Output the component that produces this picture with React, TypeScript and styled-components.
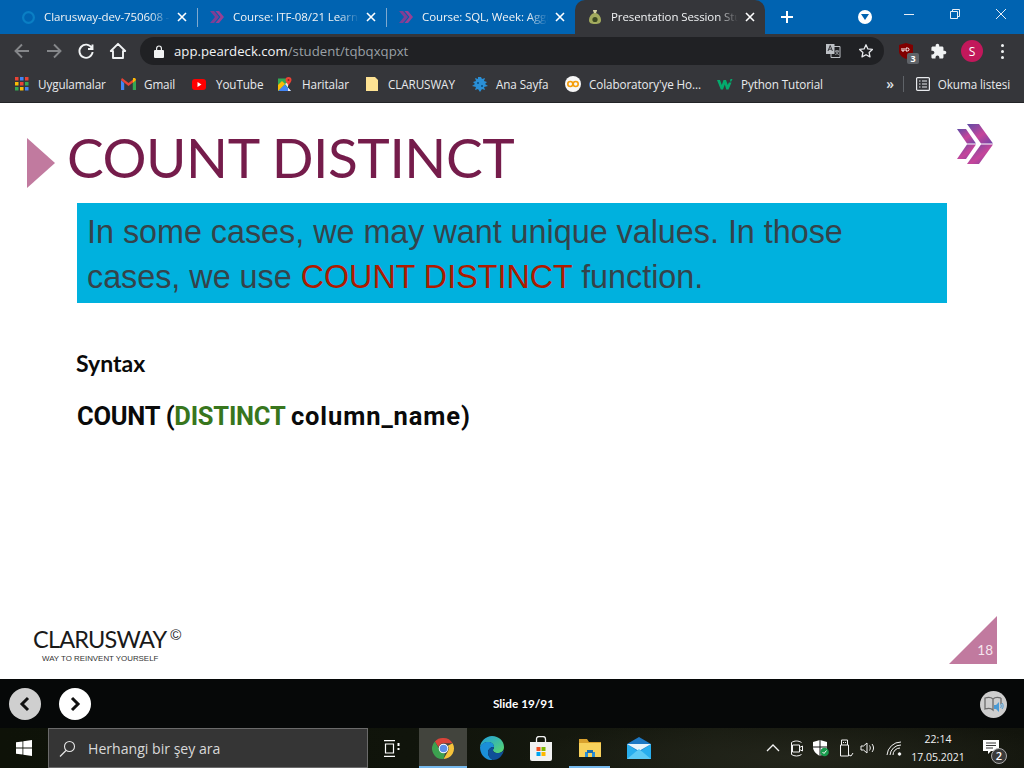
import React from "react";
import styled, { createGlobalStyle } from "styled-components";

const Global = createGlobalStyle`
  html, body { margin: 0; padding: 0; width: 1024px; height: 768px; overflow: hidden; background: #fff; }
  * { box-sizing: border-box; }
`;

const Page = styled.div`
  width: 1024px; height: 768px; display: flex; flex-direction: column;
  font-family: "Open Sans", "Liberation Sans", sans-serif; overflow: hidden;
`;

/* ---------- tab strip ---------- */
const TabStrip = styled.div`
  height: 34px; flex: none; background: #0063b1; display: flex; align-items: stretch; padding-left: 8px;
`;
const Tab = styled.div<{ $active?: boolean; $sep?: boolean }>`
  width: ${p => (p.$active ? 190 : 189)}px; flex: none; display: flex; align-items: center; padding: 0 10px 0 12px; position: relative;
  background: ${p => (p.$active ? "#35363a" : "transparent")};
  border-radius: ${p => (p.$active ? "10px 10px 0 0" : "0")};
  ${p => p.$sep ? `&::after { content: ""; position: absolute; right: -1px; top: 8px; height: 19px; width: 1px; background: #7fa9cf; }` : ""}
`;
const TabIcon = styled.span`
  width: 16px; height: 16px; flex: none; margin-right: 8px; display: flex; align-items: center; justify-content: center;
`;
const TabTitle = styled.span`
  flex: 1; min-width: 0; margin-top: -2px; overflow: hidden; white-space: nowrap; color: #f1f3f4; font-size: 11.5px; letter-spacing: -.1px;
  -webkit-mask-image: linear-gradient(to right, #000 84%, transparent 100%);
  mask-image: linear-gradient(to right, #000 84%, transparent 100%);
`;
const TabClose = styled.svg`
  width: 10px; height: 10px; flex: none; margin-left: 7px; stroke: #fff; stroke-width: 1.6; fill: none;
`;
const NewTab = styled.svg`
  width: 14px; height: 14px; margin: 10px 0 0 15px; flex: none; stroke: #fff; stroke-width: 2; fill: none;
`;
const TabSpacer = styled.div`flex: 1;`;
const ProfileDrop = styled.div`
  width: 14px; height: 14px; border-radius: 50%; background: #fff; margin: 10px 14px 0 0; display: flex; align-items: center; justify-content: center; flex: none;
`;
const WindowBtn = styled.svg`
  width: 46px; height: 28px; flex: none; stroke: #e8eef5; stroke-width: 1; fill: none;
`;

/* ---------- toolbar ---------- */
const Toolbar = styled.div`
  height: 34px; flex: none; background: #35363a; display: flex; align-items: center; padding-left: 12px;
`;
const ToolIcon = styled.svg<{ $dim?: boolean; $last?: boolean }>`
  width: 20px; height: 20px; flex: none; margin-right: ${p => (p.$last ? 7 : 12)}px; fill: none;
  stroke: ${p => (p.$dim ? "#85878a" : "#f1f3f4")}; stroke-width: 1.9;
`;
const Omnibox = styled.div`
  width: 744px; height: 28px; margin-left: 5px; border-radius: 14px; background: #202124; display: flex; align-items: center; padding-left: 14px; flex: none;
`;
const Url = styled.span`
  margin-left: 10px; font-size: 13.2px; color: #f1f3f4; white-space: nowrap;
  span { color: #9aa0a6; }
`;
const OmniRight = styled.div`
  margin-left: auto; display: flex; align-items: center; gap: 17px; padding-right: 10px;
`;
const ExtGroup = styled.div`
  display: flex; align-items: center; margin-left: 15px; flex: none;
`;
const UbadgeWrap = styled.div`
  width: 16px; height: 18px; position: relative; margin-right: 15px;
`;
const UCount = styled.span`
  position: absolute; left: 8px; top: 11px; width: 12px; height: 11px; background: #5f6368; border-radius: 2px; color: #fff; font-size: 9px; font-weight: 700; line-height: 11px; text-align: center;
`;
const Avatar = styled.div`
  width: 22px; height: 22px; border-radius: 50%; background: #c2185b; color: #fff; font-size: 12px; display: flex; align-items: center; justify-content: center; margin: 0 18px 0 14px;
`;
const Dots = styled.div`
  display: flex; flex-direction: column; gap: 3px;
  i { width: 3px; height: 3px; border-radius: 50%; background: #f1f3f4; display: block; }
`;

/* ---------- bookmarks ---------- */
const Bookmarks = styled.div`
  height: 35px; flex: none; background: #35363a; border-bottom: 1px solid #232427; display: flex; align-items: center; padding: 0 0 2px 15px; position: relative;
`;
const Mark = styled.div<{ $w: number; $gap?: number }>`
  width: ${p => p.$w}px; flex: none; display: flex; align-items: center; gap: ${p => p.$gap ?? 9}px;
  font-size: 11.7px; color: #e8eaed; white-space: nowrap; letter-spacing: -.1px;
  svg { flex: none; }
`;
const BookEnd = styled.div`
  margin-left: auto; display: flex; align-items: center; padding-right: 14px; color: #e8eaed; font-size: 11.7px; white-space: nowrap; letter-spacing: -.1px;
`;
const Chev = styled.span`
  font-size: 14px; margin-right: 9px; color: #dfe1e5; line-height: 1; font-weight: 600;
`;
const Divider = styled.span`
  width: 1px; height: 16px; background: #5f6368; margin-right: 12px;
`;
const ReadingIcon = styled.svg`
  margin-right: 8px; flex: none;
`;

/* ---------- slide ---------- */
const Slide = styled.main`
  flex: 1; background: #fff; display: flex; flex-direction: column; position: relative; padding: 32px 31px 15px 27px; min-height: 0;
`;
const TitleRow = styled.div`
  display: flex; align-items: center; height: 55px; flex: none;
`;
const Tri = styled.div`
  width: 0; height: 0; border-left: 28px solid #c17a9f; border-top: 25px solid transparent; border-bottom: 25px solid transparent; flex: none;
`;
const Title = styled.h1`
  margin: 0 0 11px 12px; font-family: "Lato", "Open Sans", sans-serif; font-weight: 400; font-size: 55px; line-height: 55px; color: #751c4b; white-space: nowrap; letter-spacing: -.45px;
`;
const Logo = styled.svg`
  position: absolute; right: 31px; top: 21px; width: 36px; height: 40px;
`;
const Callout = styled.div`
  margin: 13px 46px 0 50px; width: 870px; height: 100px; background: #00b1de; padding: 7px 10px; color: #35434a; font-family: "Liberation Sans", Arial, sans-serif; font-size: 32.3px; line-height: 44.5px; flex: none;
  b { font-weight: 400; color: #ae1b00; }
`;
const Syntax = styled.div`
  margin: 47px 0 0 49px; font-family: "Lato", sans-serif; font-weight: 700; font-size: 23px; line-height: 26px; color: #0a0a0a; flex: none;
`;
const Code = styled.div`
  margin: 24px 0 0 50px; font-family: "Roboto", sans-serif; font-weight: 700; font-size: 25.5px; line-height: 32px; color: #0a0a0a; white-space: nowrap; flex: none; letter-spacing: -.25px;
  b { font-weight: 700; color: #38761d; letter-spacing: -.25px; }
  span { letter-spacing: .9px; }
`;
const SlideFoot = styled.div`
  margin-top: auto; display: flex; align-items: flex-end; justify-content: space-between; flex: none; padding-left: 6px;
`;
const Brand = styled.div`
  display: flex; flex-direction: column; font-family: "Lato", "Liberation Sans", sans-serif; color: #1a1a1a;
`;
const BrandName = styled.div`
  font-size: 23.5px; line-height: 24px; letter-spacing: -.8px; white-space: nowrap;
  sup { font-family: "Liberation Sans", sans-serif; font-size: 15px; line-height: 0; vertical-align: 8px; margin-left: 4px; letter-spacing: 0; }
`;
const BrandTag = styled.div`
  font-family: "Liberation Sans", sans-serif; font-size: 7.9px; line-height: 10px; margin: 3px 0 0 9px; color: #333; white-space: nowrap;
`;
const Corner = styled.div`
  width: 48px; height: 48px; position: relative; margin-right: -4px;
  clip-path: polygon(100% 0, 100% 100%, 0 100%);
  background: #c17a9f; color: #f5e6ee; font-family: "Lato", sans-serif; font-size: 13.5px;
  display: flex; align-items: flex-end; justify-content: flex-end; padding: 0 4px 6px 0;
`;

/* ---------- deck nav ---------- */
const DeckBar = styled.div`
  height: 49px; flex: none; background: #060808; display: flex; align-items: center; padding: 0 17px 0 9px; position: relative;
`;
const RoundBtn = styled.button<{ $off?: boolean }>`
  width: 32px; height: 32px; border-radius: 50%; border: 0; padding: 0; background: ${p => (p.$off ? "#cfcfcf" : "#fff")}; margin-right: 18px; display: flex; align-items: center; justify-content: center; flex: none;
`;
const SlideNo = styled.div`
  position: absolute; left: 0; right: 0; top: 0; bottom: 0; display: flex; align-items: center; justify-content: center; padding-left: 23px;
  color: #fff; font-family: "Lato", sans-serif; font-weight: 700; font-size: 11.8px; pointer-events: none;
`;
const ReadBtn = styled.div`
  margin-left: auto; width: 27px; height: 27px; border-radius: 50%; background: #cdcdcd; display: flex; align-items: center; justify-content: center; z-index: 1; margin-top: 1px;
`;

/* ---------- taskbar ---------- */
const Taskbar = styled.div`
  height: 40px; flex: none; display: flex; align-items: stretch; color: #fff;
  background: radial-gradient(ellipse 280px 40px at 800px 30px, #23251b 0%, transparent 100%), linear-gradient(90deg, #0e1208, #10140b 40%, #181b11 70%, #12140c);
`;
const StartBtn = styled.div`
  width: 48px; flex: none; display: flex; align-items: center; justify-content: center;
`;
const SearchBox = styled.div`
  width: 320px; flex: none; background: #353535; border: 1px solid #6a6a6a; display: flex; align-items: center; padding-left: 10px; font-family: "Open Sans", sans-serif; font-size: 14.1px; color: #d9d9d9; gap: 12px;
`;
const TaskBtn = styled.div<{ $w?: number; $active?: boolean; $inset?: number; $pr?: number }>`
  width: ${p => p.$w ?? 49}px; flex: none; display: flex; align-items: center; justify-content: center; position: relative; padding-right: ${p => p.$pr ?? 0}px;
  background: ${p => (p.$active ? "#42443d" : "transparent")};
  ${p => (p.$inset !== undefined) ? `&::after { content: ""; position: absolute; left: ${p.$inset}px; right: ${p.$inset}px; bottom: 0; height: 2px; background: #76b9ed; }` : ""}
`;
const Tray = styled.div`
  margin-left: auto; display: flex; align-items: center; flex: none; padding-right: 13px;
`;
const TrayIcon = styled.svg<{ $mr: number }>`
  width: 18px; height: 18px; flex: none; margin-right: ${p => p.$mr}px; stroke: #f4f4f4; fill: none; stroke-width: 1;
`;
const ShieldIcon = styled.svg`
  width: 16px; height: 18px; flex: none; margin-right: 7px;
`;
const Clock = styled.div`
  width: 62px; text-align: center; font-size: 10.5px; line-height: 18px; color: #f2f2f2; font-family: "Open Sans", sans-serif; white-space: nowrap;
`;
const Notice = styled.div`
  width: 40px; align-self: stretch; position: relative; display: flex; align-items: center; justify-content: center; padding-bottom: 3px; margin-left: 2px;
`;
const NoticeCount = styled.span`
  position: absolute; left: 20px; top: 20px; width: 16px; height: 16px; border-radius: 50%; background: #3a3a3a; border: 1px solid #aaa; color: #fff; font-size: 11px; font-weight: 600; line-height: 14px; text-align: center;
`;

const X = () => (
  <TabClose viewBox="0 0 10 10"><path d="M1 1l8 8M9 1l-8 8" /></TabClose>
);
const Chevrons = ({ size = 16 }: { size?: number }) => (
  <svg width={size} height={size} viewBox="0 0 16 16">
    <path d="M1 2h4l5 6-5 6H1l5-6z" fill="#7c3f96" />
    <path d="M6.500 2h3.500l5 6-5 6H6.500l5-6z" fill="#984094" />
  </svg>
);

export default function App() {
  return (
    <Page>
      <Global />
      <TabStrip>
        <Tab $sep>
          <TabIcon>
            <svg width="15" height="15" viewBox="0 0 15 15"><circle cx="7.5" cy="7.5" r="5.4" fill="none" stroke="#0a7fc4" strokeWidth="2.2" /></svg>
          </TabIcon>
          <TabTitle>Clarusway-dev-750608 - Overview</TabTitle>
          <X />
        </Tab>
        <Tab $sep>
          <TabIcon><Chevrons /></TabIcon>
          <TabTitle>Course: ITF-08/21 Learning Path</TabTitle>
          <X />
        </Tab>
        <Tab>
          <TabIcon><Chevrons /></TabIcon>
          <TabTitle>Course: SQL, Week: Aggregate</TabTitle>
          <X />
        </Tab>
        <Tab $active>
          <TabIcon>
            <svg width="14" height="16" viewBox="0 0 14 16">
              <path d="M5 1h4L8 4c3 1 5 4 5 7 0 3-2 4-6 4s-6-1-6-4c0-3 2-6 5-7z" fill="#a3ab5e" />
              <circle cx="7" cy="10.5" r="2.6" fill="#3d4a22" />
              <path d="M5 1h4l-1 3H6z" fill="#d6d2a8" />
            </svg>
          </TabIcon>
          <TabTitle>Presentation Session Student</TabTitle>
          <X />
        </Tab>
        <NewTab viewBox="0 0 14 14"><path d="M7 1v12M1 7h12" /></NewTab>
        <TabSpacer />
        <ProfileDrop>
          <svg width="8" height="6" viewBox="0 0 8 6"><path d="M0 0h8L4 6z" fill="#0063b1" /></svg>
        </ProfileDrop>
        <WindowBtn viewBox="0 0 46 28"><path d="M18 14.5h10" /></WindowBtn>
        <WindowBtn viewBox="0 0 46 28"><path d="M18.5 11.5h7v7h-7zM20.5 11.5v-2h7v7h-2" /></WindowBtn>
        <WindowBtn viewBox="0 0 46 28"><path d="M18 9l10 10M28 9L18 19" /></WindowBtn>
      </TabStrip>

      <Toolbar>
        <ToolIcon $dim viewBox="0 0 20 20"><path d="M17 10H4M10 3.5L3.5 10l6.5 6.5" /></ToolIcon>
        <ToolIcon $dim viewBox="0 0 20 20"><path d="M3 10h13M10 3.5l6.5 6.500-6.500 6.500" /></ToolIcon>
        <ToolIcon viewBox="0 0 20 20"><path d="M15.800 7A6.600 6.600 0 1 0 16.600 11M16.500 3.500V8h-4.500" /></ToolIcon>
        <ToolIcon $last viewBox="0 0 20 20"><path d="M10 2.800L2.800 10H5v7h10v-7h2.200z" strokeLinejoin="round" /></ToolIcon>
        <Omnibox>
          <svg width="10" height="13" viewBox="0 0 10 13"><path d="M1 5h8a1 1 0 0 1 1 1v6a1 1 0 0 1-1 1H1a1 1 0 0 1-1-1V6a1 1 0 0 1 1-1z" fill="#f1f3f4" /><path d="M2.600 5V3.400a2.400 2.400 0 0 1 4.800 0V5" fill="none" stroke="#f1f3f4" strokeWidth="1.200" /></svg>
          <Url>app.peardeck.com<span>/student/tqbqxqpxt</span></Url>
          <OmniRight>
            <svg width="15" height="14" viewBox="0 0 15 14">
              <path d="M5 2.500h9v11H5z" fill="none" stroke="#bdc1c6" strokeWidth="1" />
              <path d="M0 0h8.500v10H0z" fill="#bdc1c6" />
              <path d="M2 7l2.200-5.500L6.400 7M3 5.200h2.600" fill="none" stroke="#35363a" strokeWidth="1" />
              <path d="M9 7h4M11 6v1M9.800 7c.3 2 1.500 3 3 3.500M12.300 7c-.3 2-1.500 3-3 3.500" fill="none" stroke="#bdc1c6" strokeWidth=".8" />
            </svg>
            <svg width="16" height="16" viewBox="0 0 16 16"><path d="M8 1.800l1.900 4.100 4.500.5-3.300 3 .9 4.500L8 11.700l-4 2.200.9-4.500-3.300-3 4.500-.5z" fill="none" stroke="#e8eaed" strokeWidth="1.300" strokeLinejoin="round" /></svg>
          </OmniRight>
        </Omnibox>
        <ExtGroup>
          <UbadgeWrap>
            <svg width="14" height="16" viewBox="0 0 14 16"><path d="M0 2l7-2 7 2v6c0 4-3 6-7 8-4-2-7-4-7-8z" fill="#800000" /><path d="M3 5v3h2V5M7 5v3h1.500a1.500 1.500 0 0 0 0-3z" fill="none" stroke="#fff" strokeWidth="1" /></svg>
            <UCount>3</UCount>
          </UbadgeWrap>
          <svg width="17" height="17" viewBox="0 0 24 24"><path d="M20.500 11H19V7c0-1.100-.9-2-2-2h-4V3.500C13 2.120 11.880 1 10.500 1S8 2.120 8 3.500V5H4c-1.100 0-1.990.9-1.990 2v3.800H3.500c1.490 0 2.700 1.210 2.700 2.700s-1.210 2.700-2.700 2.700H2V20c0 1.100.9 2 2 2h3.800v-1.500c0-1.490 1.210-2.700 2.700-2.700 1.490 0 2.700 1.210 2.700 2.700V22H17c1.100 0 2-.9 2-2v-4h1.500c1.380 0 2.500-1.120 2.500-2.500S21.880 11 20.500 11z" fill="#f1f3f4" /></svg>
          <Avatar>S</Avatar>
          <Dots><i /><i /><i /></Dots>
        </ExtGroup>
      </Toolbar>

      <Bookmarks>
        <Mark $w={106}>
          <svg width="14" height="14" viewBox="0 0 14 14">
            <path d="M0 0h3.500v3.500H0z" fill="#ea4335" /><path d="M5 0h3.500v3.500H5z" fill="#4285f4" /><path d="M10 0h3.500v3.500H10z" fill="#ea4335" />
            <path d="M0 5h3.500v3.500H0z" fill="#fbbc05" /><path d="M5 5h3.500v3.500H5z" fill="#ea4335" /><path d="M10 5h3.500v3.500H10z" fill="#34a853" />
            <path d="M0 10h3.500v3.500H0z" fill="#34a853" /><path d="M5 10h3.500v3.500H5z" fill="#fbbc05" /><path d="M10 10h3.500v3.500H10z" fill="#4285f4" />
          </svg>
          Uygulamalar
        </Mark>
        <Mark $w={71} $gap={8}>
          <svg width="15" height="12" viewBox="0 0 15 12">
            <path d="M0 2v10h3.200V5z" fill="#4285f4" /><path d="M15 2v10h-3.200V5z" fill="#34a853" />
            <path d="M0 2l7.500 6L15 2l-1-2-6.500 5L1 0z" fill="#ea4335" /><path d="M12 0h2l1 2-3.200 3z" fill="#fbbc05" />
          </svg>
          Gmail
        </Mark>
        <Mark $w={86} $gap={10}>
          <svg width="14" height="11" viewBox="0 0 14 11"><rect width="14" height="11" rx="3" fill="#f00" /><path d="M5.500 3l4 2.500-4 2.500z" fill="#fff" /></svg>
          YouTube
        </Mark>
        <Mark $w={88} $gap={10}>
          <svg width="14" height="14" viewBox="0 0 14 14">
            <path d="M0 1.500h10v12.500H0z" fill="#34a853" /><path d="M0 14l6.500-6.500L13 14z" fill="#4285f4" /><path d="M0 8l4-4 3 3-7 7z" fill="#fbbc05" />
            <path d="M7 7l3-2v9H13z" fill="#e8eaed" /><path d="M10.500 0a3 3 0 0 1 3 3c0 2-2 3-3 6-1-3-3-4-3-6a3 3 0 0 1 3-3z" fill="#ea4335" /><circle cx="10.500" cy="3" r="1" fill="#8f2a20" />
          </svg>
          Haritalar
        </Mark>
        <Mark $w={106} $gap={10}>
          <svg width="12" height="14" viewBox="0 0 12 14"><path d="M0 0h9l3 3v11H0z" fill="#fde293" /></svg>
          CLARUSWAY
        </Mark>
        <Mark $w={93} $gap={8}>
          <svg width="16" height="15" viewBox="0 0 16 15" fill="#2a8fd6">
            <path d="M6 0h3l1 2 3-1-1 3 3 1-2 2 3 2-4 1 1 3-3-1-2 3-2-3-3 1 1-3-4-1 3-2-2-2 3-1-1-3 3 1z" />
            <path d="M5 5h2v2H5zM9 8h2v2H9z" fill="#0e5c96" />
          </svg>
          Ana Sayfa
        </Mark>
        <Mark $w={152} $gap={8}>
          <svg width="16" height="16" viewBox="0 0 16 16">
            <circle cx="8" cy="8" r="8" fill="#f7f7f7" />
            <circle cx="5.300" cy="8" r="2.500" fill="none" stroke="#f59e0b" strokeWidth="1.600" />
            <circle cx="10.700" cy="8" r="2.500" fill="none" stroke="#f59e0b" strokeWidth="1.600" />
          </svg>
          Colaboratory'ye Ho...
        </Mark>
        <Mark $w={140} $gap={8}>
          <svg width="16" height="11" viewBox="0 0 16 11"><path d="M0 1h3l1.800 5L6.500 1h2.500l1.800 5 1-2.500h2.700L11.500 10.500H9.300L7.800 5.500 6 10.500H3.800z" fill="#04aa6d" /><path d="M13.500 0h2L14.300 2.500h-1.400z" fill="#04aa6d" /></svg>
          Python Tutorial
        </Mark>
        <BookEnd>
          <Chev>»</Chev>
          <Divider />
          <ReadingIcon width="14" height="14" viewBox="0 0 14 14">
            <rect x=".6" y=".6" width="12.800" height="12.800" rx="1" fill="none" stroke="#e8eaed" strokeWidth="1.200" />
            <path d="M3 4h1.500M3 7h1.500M3 10h1.500M6 4h5M6 7h5M6 10h5" stroke="#e8eaed" strokeWidth="1.200" />
          </ReadingIcon>
          Okuma listesi
        </BookEnd>
      </Bookmarks>

      <Slide>
        <TitleRow>
          <Tri />
          <Title>COUNT DISTINCT</Title>
        </TitleRow>
        <Logo viewBox="0 0 36 40">
          <defs>
            <linearGradient id="lg" x1="0" y1="0" x2="1" y2="1">
              <stop offset="0" stopColor="#5f4ba6" />
              <stop offset=".55" stopColor="#c6459a" />
              <stop offset="1" stopColor="#6f45a8" />
            </linearGradient>
          </defs>
          <path d="M0 5h9l10 14.500H10z" fill="url(#lg)" />
          <path d="M10 20.500h9L9 35H0z" fill="url(#lg)" />
          <path d="M10 0h12l14 19.500H24z" fill="url(#lg)" />
          <path d="M24 20.500h12L22 40H10z" fill="url(#lg)" />
        </Logo>
        <Callout>
          In some cases, we may want unique values. In those cases, we use <b>COUNT DISTINCT</b> function.
        </Callout>
        <Syntax>Syntax</Syntax>
        <Code>COUNT (<b>DISTINCT</b> <span>column_name)</span></Code>
        <SlideFoot>
          <Brand>
            <BrandName>CLARUSWAY<sup>©</sup></BrandName>
            <BrandTag>WAY TO REINVENT YOURSELF</BrandTag>
          </Brand>
          <Corner>18</Corner>
        </SlideFoot>
      </Slide>

      <DeckBar>
        <RoundBtn $off aria-label="Previous">
          <svg width="12" height="16" viewBox="0 0 12 16"><path d="M9 2L3 8l6 6" fill="none" stroke="#111" strokeWidth="3" /></svg>
        </RoundBtn>
        <RoundBtn aria-label="Next">
          <svg width="12" height="16" viewBox="0 0 12 16"><path d="M3 2l6 6-6 6" fill="none" stroke="#111" strokeWidth="3" /></svg>
        </RoundBtn>
        <SlideNo>Slide 19/91</SlideNo>
        <ReadBtn>
          <svg width="20" height="18" viewBox="0 0 20 18">
            <path d="M1 3c3-1 6-1 8 1v11c-2-2-5-2-8-1zM17 3c-3-1-6-1-8 1" fill="none" stroke="#6b6b6b" strokeWidth="1.300" />
            <path d="M17 3v6" stroke="#6b6b6b" strokeWidth="1.300" />
            <path d="M10 10h2l3-3v10l-3-3h-2z" fill="#4a9ad4" />
            <path d="M16.500 9c1 1 1 3 0 4M18 8c1.500 1.500 1.500 4.500 0 6" fill="none" stroke="#4a9ad4" strokeWidth="1" />
          </svg>
        </ReadBtn>
      </DeckBar>

      <Taskbar>
        <StartBtn>
          <svg width="16" height="16" viewBox="0 0 16 16"><path d="M0 2.300l6.500-.9v6.200H0zM7.300 1.300L16 0v7.600H7.300zM0 8.400h6.500v6.200L0 13.700zM7.300 8.400H16V16l-8.700-1.300z" fill="#fff" /></svg>
        </StartBtn>
        <SearchBox>
          <svg width="17" height="17" viewBox="0 0 17 17"><circle cx="10.500" cy="6.500" r="5" fill="none" stroke="#e6e6e6" strokeWidth="1.100" /><path d="M7 10.500L1 16.500" stroke="#e6e6e6" strokeWidth="1.300" /></svg>
          Herhangi bir şey ara
        </SearchBox>
        <TaskBtn $w={51} $pr={3}>
          <svg width="18" height="17" viewBox="0 0 18 17" fill="none" stroke="#fff" strokeWidth="1.200">
            <path d="M1 .6h11M1 16.400h11M2.500 4h8v9h-8z" /><path d="M15.500 3v3M15.500 8v2" strokeWidth="2" />
          </svg>
        </TaskBtn>
        <TaskBtn $w={48} $active $inset={0}>
          <svg width="23" height="23" viewBox="0 0 24 24">
            <path d="M12 1a11 11 0 0 1 9.500 5.500H12a5.500 5.500 0 0 0-5.300 4L3 4.600A11 11 0 0 1 12 1z" fill="#d9443a" />
            <path d="M21.500 6.500A11 11 0 0 1 12 23l4.700-8.200A5.500 5.500 0 0 0 16.500 9z" fill="#f5c33b" />
            <path d="M12 23A11 11 0 0 1 3 4.600l4.700 8.200a5.500 5.500 0 0 0 6 4z" fill="#3ca14f" />
            <circle cx="12" cy="12" r="5" fill="#fff" /><circle cx="12" cy="12" r="4" fill="#5a8ee8" />
          </svg>
        </TaskBtn>
        <TaskBtn>
          <svg width="24" height="24" viewBox="0 0 24 24">
            <defs>
              <linearGradient id="edgeTop" x1="0" y1="0" x2="1" y2="1">
                <stop offset="0" stopColor="#1d9de2" /><stop offset="1" stopColor="#5bd86a" />
              </linearGradient>
            </defs>
            <path d="M12 0c7 0 12 5 12 11 0 4-3 6-6 6-4 0-5-1.500-5-3 0-1 1-1.500 1-3 0-3-3-5-6-5S2 7.500 0 11C.5 5 6 0 12 0z" fill="url(#edgeTop)" />
            <path d="M0 11c2-3.500 4-5 8-5s6 2 6 5c-3 0-6 2-6 5.500 0 3.500 2 6 5 7.500-7 1-13-5-13-13z" fill="#1b8fd8" />
            <path d="M8 16.500c0-3.500 3-5.500 6-5.500 0 1.500-1 2-1 3 0 1.500 1 3 5 3 3 0 5-1.500 6-3-1 5-5 10-11 10-3-1.500-5-4-5-7.500z" fill="#0f4f98" />
          </svg>
        </TaskBtn>
        <TaskBtn>
          <svg width="24" height="25" viewBox="0 0 24 25">
            <path d="M7.500 7V3a2.500 2.500 0 0 1 2.500-2.500h4A2.500 2.500 0 0 1 16.500 3v4" fill="none" stroke="#f2f2f2" strokeWidth="1.300" />
            <path d="M1 6h22v17a2 2 0 0 1-2 2H3a2 2 0 0 1-2-2z" fill="#f2f2f2" />
            <path d="M7.500 11h4v4h-4z" fill="#f25022" /><path d="M12.500 11h4v4h-4z" fill="#7fba00" /><path d="M7.500 16h4v4h-4z" fill="#00a4ef" /><path d="M12.500 16h4v4h-4z" fill="#ffb900" />
          </svg>
        </TaskBtn>
        <TaskBtn $inset={4}>
          <svg width="22" height="18" viewBox="0 0 22 18">
            <path d="M0 0h8l2 3h12v15H0z" fill="#d9a12e" /><path d="M0 4h22v14H0z" fill="#f7d15c" />
            <path d="M6 13h10v5H6z" fill="#2a8fd6" /><path d="M8 11h6v3H8z" fill="#1a6db0" /><path d="M9 14h4v4H9z" fill="#f7d15c" />
          </svg>
        </TaskBtn>
        <TaskBtn>
          <svg width="24" height="22" viewBox="0 0 24 22">
            <path d="M0 7L12 0l12 7v15H0z" fill="#1d78c4" /><path d="M0 7l12 8 12-8v15H0z" fill="#28aeee" /><path d="M0 7h24L12 14z" fill="#e8f4fb" /><path d="M0 22L12 12l12 10z" fill="#5ccaf5" />
          </svg>
        </TaskBtn>
        <Tray>
          <TrayIcon $mr={6} viewBox="0 0 18 18"><path d="M3 12l6-6 6 6" strokeWidth="1.300" /></TrayIcon>
          <TrayIcon $mr={7} viewBox="0 0 18 18"><path d="M4.500 6h7v7h-7zM11.500 8.500l3-1.500v5l-3-1.500M3.500 3.500c3-2 7-2 10 0M3.500 15.500c3 2 7 2 10 0M3.500 3.500v12" /></TrayIcon>
          <ShieldIcon viewBox="0 0 16 18">
            <path d="M7 1L0 3v5c0 4 3 7 7 9 4-2 7-5 7-9V3z" fill="#fff" /><path d="M7 1v16M0 8h14" stroke="#111" strokeWidth="1" />
            <circle cx="11.500" cy="13" r="4.300" fill="#1a9c4e" /><path d="M9.500 13l1.500 1.500 2.500-3" stroke="#fff" fill="none" />
          </ShieldIcon>
          <TrayIcon $mr={5} viewBox="0 0 18 18"><path d="M5.500 6V1h6v5M4.500 6h8v11h-8zM7.500 3v1M9.500 3v1M13 16l2 1 2-3" /></TrayIcon>
          <TrayIcon $mr={9} viewBox="0 0 18 18"><path d="M2 7h2.500L8 4v10l-3.500-3H2zM10.500 6.500c1 1.500 1 3.500 0 5M13 5c2 2.500 2 5.500 0 8" /></TrayIcon>
          <TrayIcon $mr={3} viewBox="0 0 18 18" strokeWidth="1.200"><path d="M1 16a14 14 0 0 1 14-13M4 16a11 11 0 0 1 11-10M7 16a7 7 0 0 1 7-7" /><circle cx="13.500" cy="15" r="1.300" fill="#fff" /></TrayIcon>
          <Clock>22:14<br />17.05.2021</Clock>
          <Notice>
            <svg width="16" height="14" viewBox="0 0 16 14"><path d="M0 0h16v11H8l-3 3v-3H0z" fill="#fff" /><path d="M3 3h10M3 5.500h10M3 8h7" stroke="#222" strokeWidth=".9" /></svg>
            <NoticeCount>2</NoticeCount>
          </Notice>
        </Tray>
      </Taskbar>
    </Page>
  );
}
